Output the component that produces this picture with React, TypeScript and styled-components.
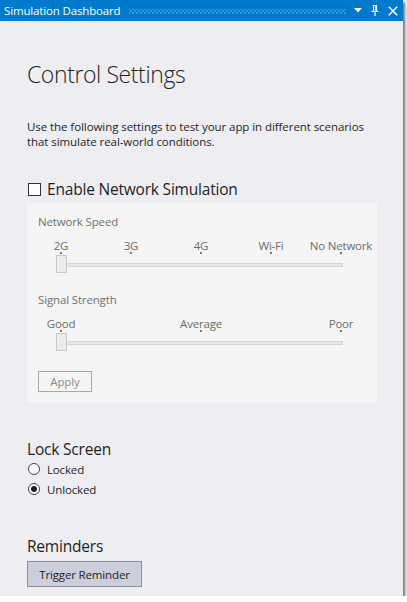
import React from 'react';
import styled, { createGlobalStyle } from 'styled-components';

const GlobalStyle = createGlobalStyle`
  html, body {
    margin: 0;
    padding: 0;
    background: #ffffff;
  }
  body {
    font-family: "Open Sans", "Noto Sans", "Liberation Sans", sans-serif;
  }
`;

const Window = styled.div`
  width: 403px;
  height: 596px;
  background: #eeeef2;
  box-shadow: 2px 2px 3px rgba(0, 0, 0, 0.6);
  display: flex;
  flex-direction: column;
  overflow: hidden;
`;

const TitleBar = styled.div`
  height: 21px;
  background: #007acc;
  display: flex;
  align-items: center;
  padding: 0 5px 0 4px;
  flex-shrink: 0;
`;

const TitleText = styled.span`
  color: #ffffff;
  font-size: 11.5px;
  letter-spacing: -0.15px;
  white-space: nowrap;
`;

const Grip = styled.div`
  flex: 1;
  height: 5px;
  margin: 1px 8px 0 8px;
  background-image:
    radial-gradient(circle, rgba(255, 255, 255, 0.35) 0.6px, transparent 0.9px),
    radial-gradient(circle, rgba(255, 255, 255, 0.35) 0.6px, transparent 0.9px);
  background-size: 4px 4px, 4px 4px;
  background-position: 0 0, 2px 2px;
`;

const TitleIcons = styled.div`
  display: flex;
  align-items: center;
  gap: 9px;
`;

const Content = styled.div`
  padding: 0 26px 0 27px;
  display: flex;
  flex-direction: column;
  color: #1e1e1e;
`;

const PageTitle = styled.h1`
  margin: 37px 0 0 0;
  font-size: 23px;
  font-weight: 300;
  line-height: 32px;
  letter-spacing: -0.4px;
`;

const Description = styled.p`
  margin: 29px 0 0 0;
  font-size: 11.5px;
  line-height: 15px;
  letter-spacing: -0.07px;
`;

const CheckRow = styled.label`
  display: flex;
  align-items: center;
  gap: 6px;
  margin-top: 30px;
  font-size: 15.5px;
  line-height: 20px;
  letter-spacing: -0.2px;
`;

const Box = styled.span`
  width: 11px;
  height: 11px;
  border: 1px solid #333337;
  background: #ffffff;
  margin-left: 1px;
`;

const Panel = styled.div`
  margin-top: 4px;
  background: #f5f5f5;
  padding: 11px 11px 10px 11px;
  width: 350px;
  box-sizing: border-box;
  display: flex;
  flex-direction: column;
`;

const FieldLabel = styled.div<{ $top?: number }>`
  font-size: 11.5px;
  line-height: 16px;
  color: #717171;
  letter-spacing: -0.15px;
  margin-top: ${(p) => p.$top ?? 0}px;
`;

const TickRow = styled.div<{ $top: number }>`
  display: flex;
  justify-content: space-between;
  width: 280px;
  margin: ${(p) => p.$top}px 0 0 23px;
`;

const Tick = styled.div`
  width: 0;
  display: flex;
  flex-direction: column;
  align-items: center;
`;

const TickLabel = styled.span`
  font-size: 11.5px;
  line-height: 14px;
  color: #6d6d6d;
  white-space: nowrap;
  letter-spacing: -0.2px;
`;

const TickDot = styled.span`
  width: 2px;
  height: 2px;
  background: #7a7a7a;
  margin-top: -1px;
`;

const Slider = styled.div`
  position: relative;
  width: 287px;
  height: 18px;
  margin: 1px 0 0 18px;
  display: flex;
  align-items: center;
`;

const Track = styled.div`
  flex: 1;
  height: 2px;
  background: #e6e6e6;
  border: 1px solid #d6d6d6;
  margin-top: 1px;
`;

const Thumb = styled.div`
  position: absolute;
  left: 0;
  top: 0;
  width: 9px;
  height: 16px;
  background: #ececec;
  border: 1px solid #c9c9c9;
`;

const ApplyButton = styled.button`
  margin-top: 20px;
  align-self: flex-start;
  width: 54px;
  height: 21px;
  padding: 0;
  background: #f5f5f5;
  border: 1px solid #a9a9a9;
  color: #8a8a8a;
  font-family: inherit;
  font-size: 11.5px;
  letter-spacing: -0.15px;
`;

const SectionTitle = styled.h2<{ $top: number }>`
  margin: ${(p) => p.$top}px 0 0 0;
  font-size: 15.5px;
  font-weight: 400;
  line-height: 20px;
  letter-spacing: -0.2px;
`;

const RadioRow = styled.label`
  display: flex;
  align-items: center;
  gap: 7px;
  height: 20px;
  font-size: 11.5px;
  letter-spacing: -0.15px;
  margin-left: 1px;
`;

const Radio = styled.span<{ $checked?: boolean }>`
  width: 10px;
  height: 10px;
  border-radius: 50%;
  border: 1px solid #3f3f46;
  background: #ffffff;
  display: flex;
  align-items: center;
  justify-content: center;

  &::after {
    content: '';
    width: 6px;
    height: 6px;
    border-radius: 50%;
    background: ${(p) => (p.$checked ? '#1e1e1e' : 'transparent')};
  }
`;

const ReminderButton = styled.button`
  margin-top: 5px;
  align-self: flex-start;
  width: 115px;
  height: 26px;
  padding: 0;
  background: #cccedb;
  border: 1px solid #8e8e94;
  color: #1e1e1e;
  font-family: inherit;
  font-size: 11.5px;
  letter-spacing: -0.15px;
`;

const speeds = ['2G', '3G', '4G', 'Wi-Fi', 'No Network'];
const strengths = ['Good', 'Average', 'Poor'];

const TickSlider: React.FC<{ labels: string[]; top: number }> = ({ labels, top }) => (
  <>
    <TickRow $top={top}>
      {labels.map((l) => (
        <Tick key={l}>
          <TickLabel>{l}</TickLabel>
          <TickDot />
        </Tick>
      ))}
    </TickRow>
    <Slider>
      <Track />
      <Thumb />
    </Slider>
  </>
);

const App: React.FC = () => (
  <>
    <GlobalStyle />
    <Window>
      <TitleBar>
        <TitleText>Simulation Dashboard</TitleText>
        <Grip />
        <TitleIcons>
          <svg width="8" height="5" viewBox="0 0 8 5">
            <path d="M0 0 H8 L4 4.5 Z" fill="#ffffff" />
          </svg>
          <svg width="8" height="11" viewBox="0 0 8 11">
            <path d="M2 0.5 H6 M2.5 0.5 V6 M5.5 0.5 V6 M0.5 6.5 H7.5 M4 6.5 V11" stroke="#ffffff" strokeWidth="1.2" fill="none" />
            <rect x="4.3" y="1" width="1.2" height="5" fill="#ffffff" />
          </svg>
          <svg width="10" height="10" viewBox="0 0 10 10">
            <path d="M0.8 0.8 L9.2 9.2 M9.2 0.8 L0.8 9.2" stroke="#ffffff" strokeWidth="1.5" />
          </svg>
        </TitleIcons>
      </TitleBar>
      <Content>
        <PageTitle>Control Settings</PageTitle>
        <Description>
          Use the following settings to test your app in different scenarios
          <br />
          that simulate real-world conditions.
        </Description>
        <CheckRow>
          <Box />
          Enable Network Simulation
        </CheckRow>
        <Panel>
          <FieldLabel>Network Speed</FieldLabel>
          <TickSlider labels={speeds} top={9} />
          <FieldLabel $top={19}>Signal Strength</FieldLabel>
          <TickSlider labels={strengths} top={9} />
          <ApplyButton>Apply</ApplyButton>
        </Panel>
        <SectionTitle $top={37}>Lock Screen</SectionTitle>
        <RadioRow>
          <Radio />
          Locked
        </RadioRow>
        <RadioRow>
          <Radio $checked />
          Unlocked
        </RadioRow>
        <SectionTitle $top={37}>Reminders</SectionTitle>
        <ReminderButton>Trigger Reminder</ReminderButton>
      </Content>
    </Window>
  </>
);

export default App;
